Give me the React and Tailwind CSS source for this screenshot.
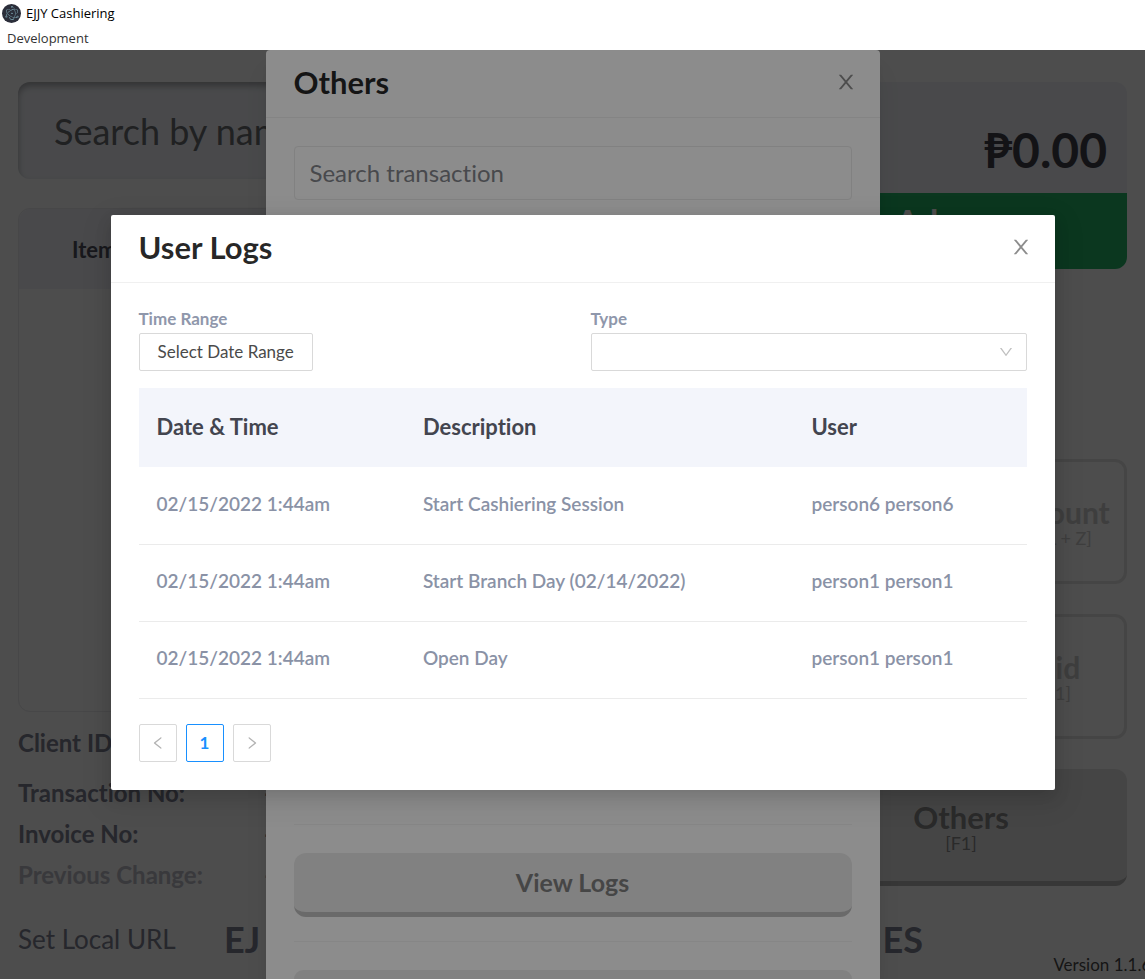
import React from "react";
import { SiElectron } from "react-icons/si";
import { AiOutlineLeft, AiOutlineRight } from "react-icons/ai";

const logs = [
  ["02/15/2022 1:44am", "Start Cashiering Session", "person6 person6"],
  ["02/15/2022 1:44am", "Start Branch Day (02/14/2022)", "person1 person1"],
  ["02/15/2022 1:44am", "Open Day", "person1 person1"],
];

function CloseIcon() {
  return (
    <svg viewBox="64 64 896 896" className="size-5" fill="currentColor" aria-hidden="true">
      <path d="M563.8 512l262.5-312.9c4.4-5.2.7-13.1-6.1-13.1h-79.8c-4.7 0-9.2 2.1-12.3 5.7L511.6 449.8 295.1 191.7c-3-3.6-7.5-5.7-12.3-5.7H203c-6.8 0-10.5 7.9-6.1 13.1L459.4 512 196.9 824.9A7.95 7.95 0 0 0 203 838h79.8c4.7 0 9.2-2.1 12.3-5.7l216.5-258.1 216.5 258.1c3 3.6 7.5 5.7 12.3 5.7h79.8c6.8 0 10.5-7.9 6.1-13.1L563.8 512z" />
    </svg>
  );
}

function DownIcon() {
  return (
    <svg viewBox="64 64 896 896" className="size-3.5" fill="currentColor" aria-hidden="true">
      <path d="M884 256h-75c-5.1 0-9.9 2.5-12.9 6.6L512 654.2 227.9 262.6c-3-4.1-7.8-6.6-12.9-6.6h-75c-6.5 0-10.3 7.4-6.5 12.7l352.6 486.1c12.8 17.6 39 17.6 51.7 0l352.6-486.1c3.9-5.3.1-12.7-6.4-12.7z" />
    </svg>
  );
}

function DialogHeader({ title }) {
  return (
    <header className="flex h-[68px] shrink-0 items-center justify-between border-b border-[#f0f0f0] pr-6 pb-1 pl-7">
      <h2 className="text-[31px] leading-9 font-bold text-black/85">{title}</h2>
      <button type="button" aria-label="Close" className="text-black/45">
        <CloseIcon />
      </button>
    </header>
  );
}

function TitleBar() {
  return (
    <header className="h-[50px] shrink-0 bg-white font-['Open_Sans',sans-serif] text-[13px] leading-5 text-black">
      <div className="flex h-[26px] items-center gap-[5px] pl-[2px]">
        <span className="flex size-[19px] items-center justify-center rounded-full bg-[#2b2e3a] text-[#9fd4e2]">
          <SiElectron size={14} />
        </span>
        <span>EJJY Cashiering</span>
      </div>
      <button type="button" className="block pl-[7px] pt-[2px] text-[#333]">
        Development
      </button>
    </header>
  );
}

function ActionButton({ label, hint }) {
  return (
    <button
      type="button"
      disabled
      className="flex h-[125px] flex-col items-center justify-center rounded-xl border-3 border-[#e7e7e7] text-[#cfcfcf]"
    >
      <span className="text-[30px] leading-8 font-bold">{label}</span>
      <span className="text-lg leading-5">{hint}</span>
    </button>
  );
}

function Cashiering() {
  return (
    <div className="flex h-full flex-col bg-white px-[18px] pt-8 pb-4">
      <div className="flex min-h-0 flex-1 justify-between gap-6">
        <section className="flex flex-1 flex-col">
          <input
            type="text"
            aria-label="Search by name"
            placeholder="Search by name"
            className="h-[97px] shrink-0 rounded-xl bg-[#f2f4f9] px-9 text-4xl text-black shadow-[inset_0_4px_6px_rgba(0,0,0,0.3)] placeholder:text-[#6c6d72]"
          />
          <div className="mt-[29px] h-[504px] rounded-xl border border-[#ebebef]">
            <div className="flex h-20 items-center rounded-t-xl bg-[#f2f4f9] pl-[53px] text-[22px] font-bold text-[#50525e]">
              Item
            </div>
          </div>
          <dl className="flex flex-col pt-4 text-2xl leading-[30px] font-bold text-[#7e8194]">
            <div className="mb-5 flex">
              <dt>Client ID</dt>
            </div>
            <div className="mb-[11px] flex">
              <dt className="w-[246px]">Transaction No:</dt>
              <dd>-</dd>
            </div>
            <div className="mb-[11px] flex">
              <dt className="w-[246px]">Invoice No:</dt>
              <dd>-</dd>
            </div>
            <div className="flex text-[#bdbdc8]">
              <dt className="w-[246px]">Previous Change:</dt>
              <dd>-</dd>
            </div>
          </dl>
        </section>
        <aside className="w-[332px] shrink-0">
          <div className="overflow-hidden rounded-xl">
            <div className="flex h-[111px] items-center justify-end bg-[#f2f4f9] pt-6 pr-5 text-5xl font-bold text-[#42434c]">
              ₱0.00
            </div>
            <button
              type="button"
              className="flex h-[76px] w-full justify-center bg-[#25b96b] pt-[9px] text-[34px] leading-10 font-bold text-white"
            >
              Advance
            </button>
          </div>
          <div className="mt-[190px] grid grid-cols-2 gap-x-6 gap-y-[30px]">
            <span />
            <ActionButton label="Discount" hint="[CTRL + Z]" />
            <span />
            <ActionButton label="Void" hint="[F11]" />
            <button
              type="button"
              className="col-span-2 flex h-[117px] flex-col items-center justify-center rounded-xl border-b-5 border-[#b6b6b6] bg-[#e8e8e8] pt-1 text-[#8c8c8c]"
            >
              <span className="text-[31px] leading-8 font-bold">Others</span>
              <span className="text-lg leading-5">[F1]</span>
            </button>
          </div>
        </aside>
      </div>
      <footer className="flex h-12 items-center text-[#7e8194]">
        <button type="button" className="w-[206px] text-left text-[26px]">
          Set Local URL
        </button>
        <p className="flex w-[699px] justify-between text-4xl font-bold">
          <span>EJ</span>
          <span>ES</span>
        </p>
      </footer>
    </div>
  );
}

function OthersDialog() {
  return (
    <section role="dialog" aria-label="Others" className="flex h-full w-[614px] flex-col rounded-t-sm bg-white shadow-xl">
      <DialogHeader title="Others" />
      <div className="flex min-h-0 flex-1 flex-col justify-between px-7 pt-7">
        <input
          type="text"
          aria-label="Search transaction"
          placeholder="Search transaction"
          className="h-[54px] rounded-sm border border-[#ebebeb] px-[15px] pb-[2px] text-2xl placeholder:text-[#84868c]"
        />
        <div className="flex flex-col">
          <hr className="border-[#f4f4f4]" />
          <button
            type="button"
            className="mt-7 mb-6 h-16 rounded-xl border-b-5 border-[#c1c1c1] bg-[#ececec] text-[25px] font-bold text-[#808080]"
          >
            View Logs
          </button>
          <hr className="border-[#f4f4f4]" />
          <div className="mt-7 h-[9px] rounded-t-xl bg-[#ececec]" />
        </div>
      </div>
    </section>
  );
}

function UserLogsDialog() {
  return (
    <section
      role="dialog"
      aria-label="User Logs"
      className="w-[944px] rounded-xs bg-white shadow-[0_6px_16px_rgba(0,0,0,0.12),0_9px_28px_8px_rgba(0,0,0,0.06)]"
    >
      <DialogHeader title="User Logs" />
      <div className="px-7 pt-6 pb-7">
        <div className="grid grid-cols-2 gap-4">
          <div className="flex flex-col items-start">
            <label htmlFor="range" className="text-[17px] leading-6 font-bold text-[#8f97ab]">
              Time Range
            </label>
            <button
              id="range"
              type="button"
              className="mt-[2px] h-[38px] rounded-xs border border-[#d9d9d9] px-[18px] text-[17px] text-[#4a4a4a]"
            >
              Select Date Range
            </button>
          </div>
          <div className="flex flex-col">
            <label htmlFor="type" className="text-[17px] leading-6 font-bold text-[#8f97ab]">
              Type
            </label>
            <div className="relative mt-[2px]">
              <select id="type" className="block h-[38px] w-full appearance-none rounded-xs border border-[#d9d9d9] bg-white px-3">
                <option></option>
              </select>
              <span className="pointer-events-none absolute inset-y-0 right-3.5 flex items-center text-black/25">
                <DownIcon />
              </span>
            </div>
          </div>
        </div>
        <table className="mt-[17px] w-full table-fixed text-left">
          <thead>
            <tr className="h-[79px] bg-[#f3f5fb] text-[22px] text-[#43454f]">
              <th className="w-[30%] px-[18px] pb-[2px] font-bold">Date &amp; Time</th>
              <th className="px-[18px] pb-[2px] font-bold">Description</th>
              <th className="w-[233px] px-[18px] pb-[2px] font-bold">User</th>
            </tr>
          </thead>
          <tbody className="text-[19px] font-semibold text-[#8a92a6]">
            {logs.map((row, i) => (
              <tr key={i} className="h-[77px] border-b border-[#ebebeb]">
                {row.map((cell, j) => (
                  <td key={j} className="px-[18px] pb-[2px]">
                    {cell}
                  </td>
                ))}
              </tr>
            ))}
          </tbody>
        </table>
        <nav aria-label="Pagination" className="mt-[25px] flex gap-[9px]">
          <button type="button" aria-label="Previous page" className="flex size-[38px] items-center justify-center rounded-xs border border-[#d9d9d9] text-black/30">
            <AiOutlineLeft size={16} />
          </button>
          <button type="button" className="flex size-[38px] items-center justify-center rounded-xs border border-[#1890ff] text-[17px] font-bold text-[#1890ff]">
            1
          </button>
          <button type="button" aria-label="Next page" className="flex size-[38px] items-center justify-center rounded-xs border border-[#d9d9d9] text-black/30">
            <AiOutlineRight size={16} />
          </button>
        </nav>
      </div>
    </section>
  );
}

export default function App() {
  return (
    <div className="flex h-screen flex-col overflow-hidden font-['Lato',sans-serif] [font-variant-ligatures:none]">
      <TitleBar />
      <main className="relative min-h-0 flex-1 overflow-hidden">
        <Cashiering />
        <div className="absolute inset-0 flex justify-center bg-black/45">
          <OthersDialog />
        </div>
        <div className="absolute inset-0 flex items-start justify-center bg-black/45 pt-[165px] pl-5">
          <UserLogsDialog />
        </div>
        <p className="absolute bottom-0 left-[92%] whitespace-nowrap text-[17px] leading-7 text-[#151515]">Version 1.1.6</p>
      </main>
    </div>
  );
}
